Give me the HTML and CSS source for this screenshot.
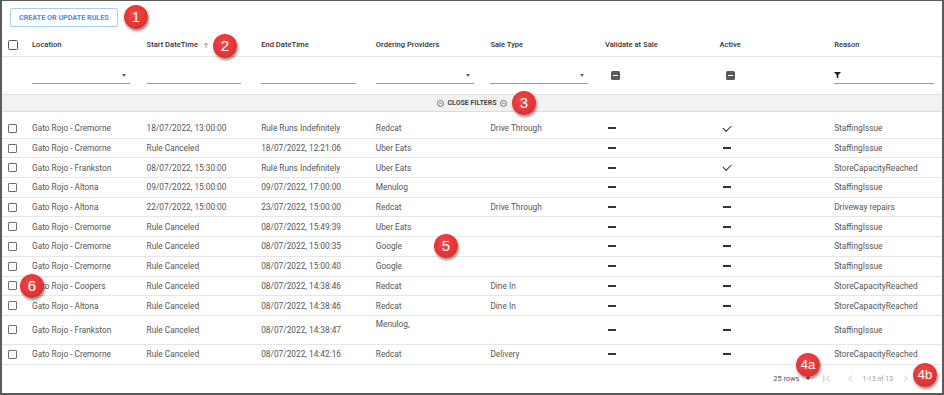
FILE: index.html
```html
<!DOCTYPE html>
<html lang="en">
<head>
    <meta charset="UTF-8">
    <meta name="viewport" content="width=device-width, initial-scale=1.0">
    <title>Rules</title>
    <link rel="stylesheet" href="styles.css">
</head>
<body>
<div class="frame">
    <div class="toolbar">
        <button class="btn-outline" type="button">Create or update rules</button>
    </div>

    <div class="row head">
        <div class="cell"><span class="checkbox big"></span></div>
        <div class="cell">Location</div>
        <div class="cell">Start DateTime
            <svg class="sort" width="6" height="6" viewBox="0 0 6 6"><path d="M3 6V1M1 3l2-2 2 2" fill="none" stroke="#999" stroke-width="0.9"/></svg>
        </div>
        <div class="cell">End DateTime</div>
        <div class="cell">Ordering Providers</div>
        <div class="cell">Sale Type</div>
        <div class="cell">Validate at Sale</div>
        <div class="cell">Active</div>
        <div class="cell">Reason</div>
    </div>

    <div class="row filters">
        <div class="cell"></div>
        <div class="cell"><div class="field w98"><span class="caret"></span></div></div>
        <div class="cell"><div class="field w94"></div></div>
        <div class="cell"><div class="field w95"></div></div>
        <div class="cell"><div class="field w98"><span class="caret"></span></div></div>
        <div class="cell"><div class="field w98"><span class="caret"></span></div></div>
        <div class="cell"><span class="tri-box"></span></div>
        <div class="cell"><span class="tri-box"></span></div>
        <div class="cell"><div class="field w100 left">
            <svg width="7" height="6" viewBox="0 0 7 6"><path d="M0 0h7L4.3 3v3H2.7V3z" fill="#222"/></svg>
        </div></div>
    </div>

    <div class="close-bar">
        <svg width="7" height="7" viewBox="0 0 8 8"><circle cx="4" cy="4" r="3.4" fill="none" stroke="#555" stroke-width="0.9"/><path d="M2.4 4.8L4 3.2l1.6 1.6" fill="none" stroke="#555" stroke-width="0.9"/></svg>
        <span>Close filters</span>
        <svg width="7" height="7" viewBox="0 0 8 8"><circle cx="4" cy="4" r="3.4" fill="none" stroke="#555" stroke-width="0.9"/><path d="M2.4 4.8L4 3.2l1.6 1.6" fill="none" stroke="#555" stroke-width="0.9"/></svg>
    </div>

    <div class="rows">
        <div class="row data">
            <div class="cell"><span class="checkbox"></span></div>
            <div class="cell">Gato Rojo - Cremorne</div>
            <div class="cell">18/07/2022, 13:00:00</div>
            <div class="cell">Rule Runs Indefinitely</div>
            <div class="cell">Redcat</div>
            <div class="cell">Drive Through</div>
            <div class="cell"><span class="dash"></span></div>
            <div class="cell"><span class="check"></span></div>
            <div class="cell">StaffingIssue</div>
        </div>
        <div class="row data">
            <div class="cell"><span class="checkbox"></span></div>
            <div class="cell">Gato Rojo - Cremorne</div>
            <div class="cell">Rule Canceled</div>
            <div class="cell">18/07/2022, 12:21:06</div>
            <div class="cell">Uber Eats</div>
            <div class="cell"></div>
            <div class="cell"><span class="dash"></span></div>
            <div class="cell"><span class="dash"></span></div>
            <div class="cell">StaffingIssue</div>
        </div>
        <div class="row data">
            <div class="cell"><span class="checkbox"></span></div>
            <div class="cell">Gato Rojo - Frankston</div>
            <div class="cell">08/07/2022, 15:30:00</div>
            <div class="cell">Rule Runs Indefinitely</div>
            <div class="cell">Uber Eats</div>
            <div class="cell"></div>
            <div class="cell"><span class="dash"></span></div>
            <div class="cell"><span class="check"></span></div>
            <div class="cell">StoreCapacityReached</div>
        </div>
        <div class="row data">
            <div class="cell"><span class="checkbox"></span></div>
            <div class="cell">Gato Rojo - Altona</div>
            <div class="cell">09/07/2022, 15:00:00</div>
            <div class="cell">09/07/2022, 17:00:00</div>
            <div class="cell">Menulog</div>
            <div class="cell"></div>
            <div class="cell"><span class="dash"></span></div>
            <div class="cell"><span class="dash"></span></div>
            <div class="cell">StaffingIssue</div>
        </div>
        <div class="row data">
            <div class="cell"><span class="checkbox"></span></div>
            <div class="cell">Gato Rojo - Altona</div>
            <div class="cell">22/07/2022, 15:00:00</div>
            <div class="cell">23/07/2022, 15:00:00</div>
            <div class="cell">Redcat</div>
            <div class="cell">Drive Through</div>
            <div class="cell"><span class="dash"></span></div>
            <div class="cell"><span class="dash"></span></div>
            <div class="cell">Driveway repairs</div>
        </div>
        <div class="row data">
            <div class="cell"><span class="checkbox"></span></div>
            <div class="cell">Gato Rojo - Cremorne</div>
            <div class="cell">Rule Canceled</div>
            <div class="cell">08/07/2022, 15:49:39</div>
            <div class="cell">Uber Eats</div>
            <div class="cell"></div>
            <div class="cell"><span class="dash"></span></div>
            <div class="cell"><span class="dash"></span></div>
            <div class="cell">StaffingIssue</div>
        </div>
        <div class="row data">
            <div class="cell"><span class="checkbox"></span></div>
            <div class="cell">Gato Rojo - Cremorne</div>
            <div class="cell">Rule Canceled</div>
            <div class="cell">08/07/2022, 15:00:35</div>
            <div class="cell">Google</div>
            <div class="cell"></div>
            <div class="cell"><span class="dash"></span></div>
            <div class="cell"><span class="dash"></span></div>
            <div class="cell">StaffingIssue</div>
        </div>
        <div class="row data">
            <div class="cell"><span class="checkbox"></span></div>
            <div class="cell">Gato Rojo - Cremorne</div>
            <div class="cell">Rule Canceled</div>
            <div class="cell">08/07/2022, 15:00:40</div>
            <div class="cell">Google</div>
            <div class="cell"></div>
            <div class="cell"><span class="dash"></span></div>
            <div class="cell"><span class="dash"></span></div>
            <div class="cell">StaffingIssue</div>
        </div>
        <div class="row data">
            <div class="cell"><span class="checkbox"></span></div>
            <div class="cell">Gato Rojo - Coopers</div>
            <div class="cell">Rule Canceled</div>
            <div class="cell">08/07/2022, 14:38:46</div>
            <div class="cell">Redcat</div>
            <div class="cell">Dine In</div>
            <div class="cell"><span class="dash"></span></div>
            <div class="cell"><span class="dash"></span></div>
            <div class="cell">StoreCapacityReached</div>
        </div>
        <div class="row data">
            <div class="cell"><span class="checkbox"></span></div>
            <div class="cell">Gato Rojo - Altona</div>
            <div class="cell">Rule Canceled</div>
            <div class="cell">08/07/2022, 14:38:46</div>
            <div class="cell">Redcat</div>
            <div class="cell">Dine In</div>
            <div class="cell"><span class="dash"></span></div>
            <div class="cell"><span class="dash"></span></div>
            <div class="cell">StoreCapacityReached</div>
        </div>
        <div class="row data tall">
            <div class="cell"><span class="checkbox"></span></div>
            <div class="cell">Gato Rojo - Frankston</div>
            <div class="cell">Rule Canceled</div>
            <div class="cell">08/07/2022, 14:38:47</div>
            <div class="cell top">Menulog,</div>
            <div class="cell"></div>
            <div class="cell"><span class="dash"></span></div>
            <div class="cell"><span class="dash"></span></div>
            <div class="cell">StaffingIssue</div>
        </div>
        <div class="row data">
            <div class="cell"><span class="checkbox"></span></div>
            <div class="cell">Gato Rojo - Cremorne</div>
            <div class="cell">Rule Canceled</div>
            <div class="cell">08/07/2022, 14:42:16</div>
            <div class="cell">Redcat</div>
            <div class="cell">Delivery</div>
            <div class="cell"><span class="dash"></span></div>
            <div class="cell"><span class="dash"></span></div>
            <div class="cell">StoreCapacityReached</div>
        </div>
    </div>

    <div class="pager">
        <span class="page-size">25 rows</span>
        <span class="caret dark"></span>
        <svg class="pg first" width="8" height="7" viewBox="0 0 8 7"><path d="M0.8 0v7M6.5 0.5L3.5 3.5l3 3" fill="none" stroke="#bbb" stroke-width="0.9"/></svg>
        <svg class="pg prev" width="5" height="7" viewBox="0 0 5 7"><path d="M4 0.5L1 3.5l3 3" fill="none" stroke="#bbb" stroke-width="0.9"/></svg>
        <span class="page-info">1-13 of 13</span>
        <svg class="pg next" width="5" height="7" viewBox="0 0 5 7"><path d="M1 0.5L4 3.5l-3 3" fill="none" stroke="#bbb" stroke-width="0.9"/></svg>
    </div>

    <span class="badge b1">1</span>
    <span class="badge b2">2</span>
    <span class="badge b3">3</span>
    <span class="badge b4a">4a</span>
    <span class="badge b4b">4b</span>
    <span class="badge b5">5</span>
    <span class="badge b6">6</span>
</div>
</body>
</html>
```

FILE: styles.css
```css
body {
    margin: 0;
    font-family: Roboto, "Liberation Sans", Arial, sans-serif;
    background-color: #fff;
}
.frame {
    position: relative;
    width: 944px;
    height: 395px;
    box-sizing: border-box;
    border: 2px solid #5c5c5c;
    border-top-width: 1px;
    overflow: hidden;
    color: #555;
    font-size: 8.3px;
}
.toolbar {
    padding: 7px 8px 6px;
}
.btn-outline {
    height: 19px;
    padding: 0 8px;
    background: #fff;
    border: 1px solid #a9cdf0;
    border-radius: 2px;
    color: #4d8fd6;
    font-family: Roboto, "Liberation Sans", Arial, sans-serif;
    font-size: 7.2px;
    font-weight: 700;
    text-transform: uppercase;
    cursor: pointer;
}
.row {
    display: grid;
    grid-template-columns: 30px repeat(7, 114.6px) 1fr;
    align-items: center;
    box-sizing: border-box;
    border-bottom: 1px solid #e6e6e6;
}
.cell {
    display: flex;
    align-items: center;
    white-space: nowrap;
}
.cell:first-child {
    padding-left: 6px;
}
.head {
    height: 24px;
    color: #333;
    font-size: 7.6px;
    font-weight: 500;
}
.sort {
    margin-left: 5px;
}
.checkbox {
    display: inline-block;
    width: 9px;
    height: 9px;
    box-sizing: border-box;
    border: 1px solid #707070;
    border-radius: 1px;
}
.checkbox.big {
    width: 10px;
    height: 10px;
    border: 1.5px solid #555;
    border-radius: 1.5px;
}
.filters {
    height: 38px;
    border-bottom: 1px solid #e3e3e3;
}
.field {
    position: relative;
    height: 16px;
    box-sizing: border-box;
    border-bottom: 1px solid #9a9a9a;
    display: flex;
    align-items: center;
    justify-content: flex-end;
}
.field.left {
    justify-content: flex-start;
}
.w94 { width: 94px; }
.w95 { width: 95px; }
.w98 { width: 98px; }
.w100 { width: 100px; }
.caret {
    display: inline-block;
    width: 0;
    height: 0;
    margin-right: 4px;
    border-left: 2.5px solid transparent;
    border-right: 2.5px solid transparent;
    border-top: 3px solid #666;
}
.caret.dark {
    border-top-color: #555;
    margin: 0 13px 0 7px;
}
.tri-box {
    position: relative;
    display: inline-block;
    width: 9px;
    height: 9px;
    margin-left: 6.5px;
    background: #5a5a5a;
    border-radius: 1.5px;
}
.tri-box::after {
    content: "";
    position: absolute;
    left: 2px;
    right: 2px;
    top: 4px;
    height: 1.2px;
    background: #fff;
}
.close-bar {
    height: 16px;
    display: flex;
    align-items: center;
    justify-content: center;
    gap: 4px;
    background: #f2f2f2;
    border-bottom: 1px solid #dcdcdc;
    color: #444;
    font-size: 7px;
    font-weight: 700;
    text-transform: uppercase;
}
.rows {
    padding-top: 7px;
}
.data {
    height: 19.7px;
}
.data.tall {
    height: 29px;
    align-items: stretch;
}
.data.tall .cell.top {
    align-items: flex-start;
    padding-top: 3px;
}
.dash {
    display: inline-block;
    width: 8px;
    height: 0;
    margin-left: 3px;
    border-top: 2px solid #333;
}
.check {
    display: inline-block;
    width: 7px;
    height: 3.5px;
    margin-left: 3px;
    margin-top: -3px;
    border-left: 1.2px solid #333;
    border-bottom: 1.2px solid #333;
    transform: rotate(-45deg);
}
.pager {
    height: 28px;
    display: flex;
    align-items: center;
    justify-content: flex-end;
    padding-right: 34px;
    color: #555;
    font-size: 7.4px;
}
.pg.first {
    margin-right: 17px;
}
.pg.prev {
    margin-right: 9px;
}
.page-info {
    color: #9a9a9a;
    font-size: 6.8px;
    margin-right: 10px;
}
.badge {
    position: absolute;
    width: 24px;
    height: 24px;
    margin: -12px 0 0 -12px;
    border-radius: 50%;
    background: radial-gradient(circle at 45% 40%, #f24a4a 0%, #e43535 55%, #c62828 100%);
    box-shadow: 1px 2px 3px rgba(0, 0, 0, 0.45);
    color: #fff;
    font-family: "Liberation Sans", Arial, sans-serif;
    font-size: 15px;
    line-height: 24px;
    text-align: center;
}
.b1 { left: 134px; top: 16px; }
.b2 { left: 223px; top: 45px; }
.b3 { left: 522px; top: 102px; }
.b4a { left: 806px; top: 364px; font-size: 13px; }
.b4b { left: 923px; top: 374px; font-size: 13px; }
.b5 { left: 444px; top: 245px; }
.b6 { left: 30px; top: 285px; }
```
